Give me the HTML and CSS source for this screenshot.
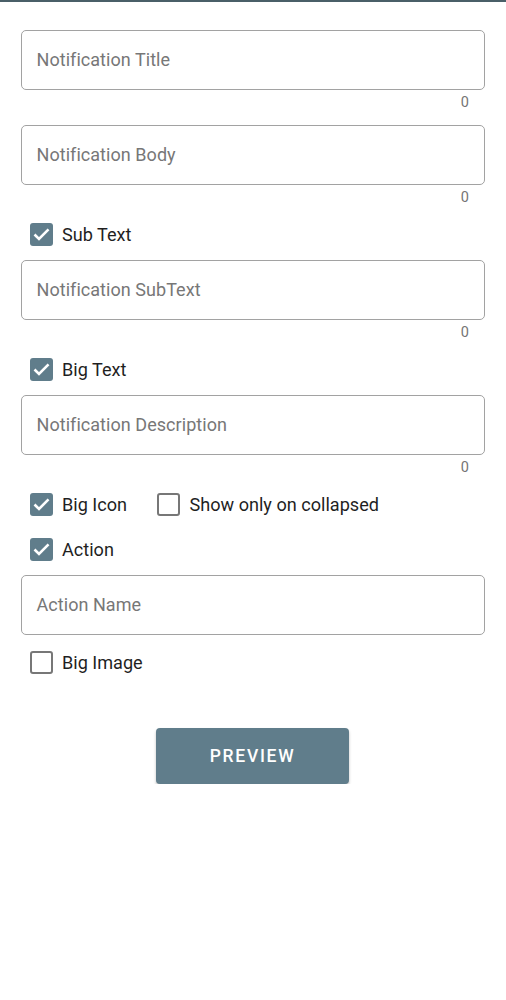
FILE: index.html
```html
<!DOCTYPE html>
<html>
<head>
<meta charset="utf-8">
<link rel="stylesheet" href="styles.css">
</head>
<body>
<div class="topbar"></div>
<main class="form">
  <div class="field"><span class="placeholder">Notification Title</span></div>
  <div class="counter">0</div>
  <div class="field"><span class="placeholder">Notification Body</span></div>
  <div class="counter">0</div>
  <div class="check">
    <label class="item"><span class="box on"><svg viewBox="0 0 23 23"><polyline points="4.5,11.5 9,16 18.5,6.4"/></svg></span><span class="label">Sub Text</span></label>
  </div>
  <div class="field"><span class="placeholder">Notification SubText</span></div>
  <div class="counter">0</div>
  <div class="check">
    <label class="item"><span class="box on"><svg viewBox="0 0 23 23"><polyline points="4.5,11.5 9,16 18.5,6.4"/></svg></span><span class="label">Big Text</span></label>
  </div>
  <div class="field"><span class="placeholder">Notification Description</span></div>
  <div class="counter">0</div>
  <div class="check">
    <label class="item"><span class="box on"><svg viewBox="0 0 23 23"><polyline points="4.5,11.5 9,16 18.5,6.4"/></svg></span><span class="label">Big Icon</span></label>
    <label class="item"><span class="box"></span><span class="label">Show only on collapsed</span></label>
  </div>
  <div class="check">
    <label class="item"><span class="box on"><svg viewBox="0 0 23 23"><polyline points="4.5,11.5 9,16 18.5,6.4"/></svg></span><span class="label">Action</span></label>
  </div>
  <div class="field"><span class="placeholder">Action Name</span></div>
  <div class="check">
    <label class="item"><span class="box"></span><span class="label">Big Image</span></label>
  </div>
  <div class="actions">
    <button class="preview">PREVIEW</button>
  </div>
</main>
</body>
</html>
```

FILE: styles.css
```css
html, body {
  margin: 0;
  padding: 0;
  background: #ffffff;
  font-family: Roboto, "Noto Sans", Arial, sans-serif;
}

.topbar {
  height: 2px;
  background: #4a5f68;
}

.form {
  display: flex;
  flex-direction: column;
  padding: 28px 21px 0 21px;
}

.field {
  box-sizing: border-box;
  height: 60px;
  border: 1.5px solid #a2a2a2;
  border-radius: 5px;
  display: flex;
  align-items: center;
  padding-left: 14.5px;
  padding-bottom: 1px;
}

.placeholder {
  font-size: 18px;
  color: #777777;
  letter-spacing: 0.05px;
}

.counter {
  box-sizing: border-box;
  height: 22px;
  line-height: 22px;
  padding-top: 2px;
  text-align: right;
  padding-right: 16px;
  font-size: 14.5px;
  color: #757575;
}

.counter + .field { margin-top: 13px; }
.counter + .check { margin-top: 7px; }
.check + .field { margin-top: 6px; }
.check + .check { margin-top: 5px; }
.field + .check { margin-top: 7px; }

.check {
  height: 40px;
  display: flex;
  align-items: center;
  gap: 30px;
  padding-left: 8.5px;
}

.item {
  display: flex;
  align-items: center;
  gap: 9.5px;
}

.box {
  box-sizing: border-box;
  width: 23px;
  height: 23px;
  border: 2.3px solid #777777;
  border-radius: 3px;
  display: flex;
  align-items: center;
  justify-content: center;
}

.box.on {
  background: #607d8b;
  border: none;
}

.box svg {
  width: 23px;
  height: 23px;
  flex: none;
}

.box svg polyline {
  fill: none;
  stroke: #ffffff;
  stroke-width: 2.6;
}

.label {
  font-size: 18.1px;
  color: #1f1f1f;
}

.actions {
  display: flex;
  justify-content: center;
  margin-top: 46px;
  padding-right: 1px;
}

.preview {
  width: 193px;
  height: 56px;
  border: none;
  border-radius: 4px;
  background: #607d8b;
  color: #ffffff;
  font-family: Roboto, "Noto Sans", Arial, sans-serif;
  font-size: 17.5px;
  font-weight: 500;
  letter-spacing: 1.7px;
  box-shadow: 0 2px 3px rgba(0, 0, 0, 0.25);
}
```
